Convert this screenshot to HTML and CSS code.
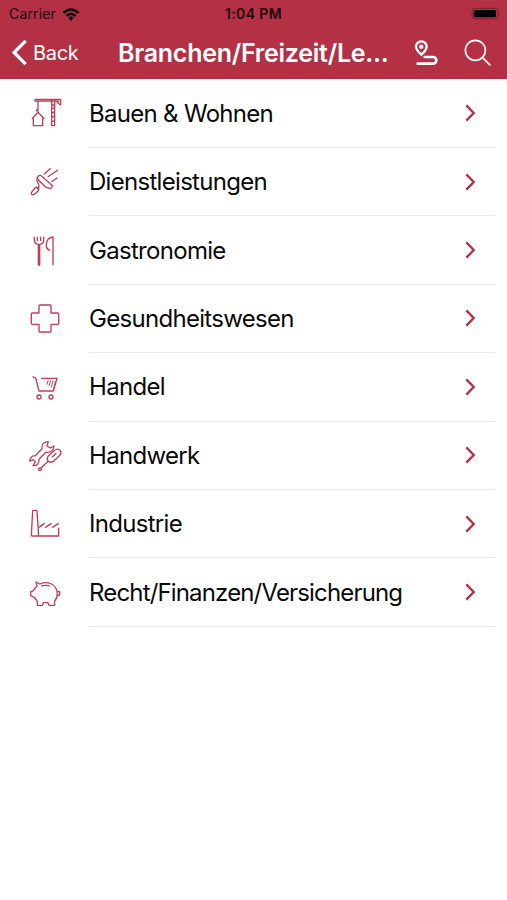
FILE: index.html
```html
<!DOCTYPE html>
<html lang="de">
<head>
  <meta charset="UTF-8" />
  <meta name="viewport" content="width=device-width, initial-scale=1.0"/>
  <title>Branchen/Freizeit/Leben</title>
  <link rel="stylesheet" href="styles.css">
</head>
<body>
  <header>
    <div class="status-bar">
      <div class="carrier">
        <span>Carrier</span>
        <svg class="wifi" viewBox="0 0 54 42">
          <path d="M2 15 Q27 -8 52 15 L47 20 Q27 2 7 20 Z"/>
          <path d="M11 24 Q27 9 43 24 L38 29 Q27 19 16 29 Z"/>
          <path d="M19 32 Q27 25 35 32 L27 41 Z"/>
        </svg>
      </div>
      <span class="time">1:04 PM</span>
      <svg class="battery" viewBox="0 0 90 42">
        <rect class="shell" x="3" y="4" width="78" height="32" rx="10"/>
        <rect x="8" y="9" width="67" height="22" rx="5"/>
        <path class="tip" d="M85 15 Q90 20 85 25 Z"/>
      </svg>
    </div>

    <nav>
      <a class="back" href="#">
        <svg viewBox="0 0 48 80"><path d="M41 5 L6 40 L41 75"/></svg>
        <span>Back</span>
      </a>
      <h1>Branchen/Freizeit/Le...</h1>
      <a class="route" href="#" aria-label="Route">
        <svg viewBox="0 0 72 78">
          <path d="M22 44 Q6 29 6 20 A16 16 0 0 1 38 20 Q38 29 22 44 Z"/>
          <circle cx="22" cy="20" r="3"/>
          <path class="road" d="M32 51 H57 A10 10 0 0 1 57 71 H11"/>
        </svg>
      </a>
      <a class="search" href="#" aria-label="Suche">
        <svg viewBox="0 0 84 84">
          <circle cx="34" cy="34" r="30"/>
          <path d="M56 56 L79 79"/>
        </svg>
      </a>
    </nav>
  </header>

  <main>
    <ul>
      <li>
        <svg class="icon" viewBox="0 0 180 150">
          <path d="M43 28 H122 V45 L112 38 V33 M43 33 H118"/>
          <path d="M54 33 V57 Q47 60 51 64 M54 57 V67 L36 86 M54 67 L73 86 M40 85 V107 H68 V85"/>
          <path d="M95 30 V108 M104 30 V108 M95 45 H104 M95 57 L104 52 M95 70 L104 65 M95 83 L104 78 M95 96 L104 91 M95 107 H104"/>
        </svg>
        <a href="#">
          <span>Bauen &amp; Wohnen</span>
          <svg class="chevron" viewBox="0 0 36 54"><path d="M7 4 L29 27 L7 50"/></svg>
        </a>
      </li>
      <li>
        <svg class="icon" viewBox="0 0 180 150">
          <path d="M64 53 L98 84 L92 92 L78 88 L54 65 Q50 59 54 55 Q58 51 64 53"/>
          <path d="M54 58 Q48 65 53 73 Q62 86 51 93 M55 88 Q59 95 51 102 L41 110 Q33 112 34 104 L45 90 Q50 86 55 88"/>
          <path d="M72 49 L92 31 M83 57 L114 36 M94 72 L112 59"/>
        </svg>
        <a href="#">
          <span>Dienstleistungen</span>
          <svg class="chevron" viewBox="0 0 36 54"><path d="M7 4 L29 27 L7 50"/></svg>
        </a>
      </li>
      <li>
        <svg class="icon" viewBox="0 0 180 150">
          <path d="M43 29 V40 Q43 51 55 52 V114 H59 V52 Q71 51 71 40 V29 M52 29 V43 M62 29 V43"/>
          <path d="M99 115 V30 Q80 32 79 53 Q78 67 90 70"/>
        </svg>
        <a href="#">
          <span>Gastronomie</span>
          <svg class="chevron" viewBox="0 0 36 54"><path d="M7 4 L29 27 L7 50"/></svg>
        </a>
      </li>
      <li>
        <svg class="icon" viewBox="0 0 180 150">
          <path d="M60 30 H90 Q93 30 93 33 V54 H113 Q116 54 116 57 V85 Q116 88 113 88 H93 V108 Q93 111 90 111 H60 Q57 111 57 108 V88 H37 Q34 88 34 85 V57 Q34 54 37 54 H57 V33 Q57 30 60 30 Z"/>
        </svg>
        <a href="#">
          <span>Gesundheitswesen</span>
          <svg class="chevron" viewBox="0 0 36 54"><path d="M7 4 L29 27 L7 50"/></svg>
        </a>
      </li>
      <li>
        <svg class="icon" viewBox="0 0 180 150">
          <path d="M38 41 L47 45 L57 84 H100 L111 46 H64"/>
          <path class="thin" d="M80 65 L85 52 M87 69 L92 52 M94 73 L99 53 M101 77 L107 54"/>
          <circle cx="57" cy="102" r="6"/>
          <circle cx="93" cy="102" r="6"/>
        </svg>
        <a href="#">
          <span>Handel</span>
          <svg class="chevron" viewBox="0 0 36 54"><path d="M7 4 L29 27 L7 50"/></svg>
        </a>
      </li>
      <li>
        <svg class="icon" viewBox="0 0 180 150">
          <path d="M85 29 Q64 29 66 50 L46 71 Q31 71 29 87 L40 83 L46 90 L39 101 Q58 102 57 82 L77 61 Q100 63 102 42 L91 48 L81 42 Z"/>
          <path d="M84 73 L102 56 Q114 47 121 56 Q126 64 117 72 L99 89 Q90 93 84 87 Q79 80 84 73 M109 63 L96 76"/>
          <path d="M84 88 L63 108"/>
          <circle cx="60" cy="112" r="4"/>
        </svg>
        <a href="#">
          <span>Handwerk</span>
          <svg class="chevron" viewBox="0 0 36 54"><path d="M7 4 L29 27 L7 50"/></svg>
        </a>
      </li>
      <li>
        <svg class="icon" viewBox="0 0 180 150">
          <path d="M34 108 L38 33 Q38 31 40 31 H49 Q51 31 51 33 L56 108 M34 108 H116 V83"/>
          <path d="M56 82 L74 70 M75 83 L95 70 M96 83 L116 70"/>
        </svg>
        <a href="#">
          <span>Industrie</span>
          <svg class="chevron" viewBox="0 0 36 54"><path d="M7 4 L29 27 L7 50"/></svg>
        </a>
      </li>
      <li>
        <svg class="icon" viewBox="0 0 180 150">
          <path d="M48 39 L60 45 Q77 37 94 45 Q107 51 111 66 Q114 84 104 96 V109 H87 L84 101 H70 L67 109 H52 V97 L42 84 L32 80 V68 Q40 68 43 60 L51 51 Z"/>
          <path d="M64 51 Q77 47 89 51 M111 68 H119 V78 L112 80"/>
        </svg>
        <a href="#">
          <span class="long">Recht/Finanzen/Versicherung</span>
          <svg class="chevron" viewBox="0 0 36 54"><path d="M7 4 L29 27 L7 50"/></svg>
        </a>
      </li>
    </ul>
  </main>
</body>
</html>
```
FILE: styles.css
```css
:root {
  --primary-color: #b43045;
  --icon-color: #bd3e58;
  --line-color: #e9e9ea;
}

body {
  font-family: Inter, "Liberation Sans", sans-serif;
  background-color: #fff;
  color: #0a0a0a;
  margin: 0;
}

a {
  color: inherit;
  text-decoration: none;
}

svg {
  display: block;
  flex-shrink: 0;
}

header {
  height: 79px;
  background-color: var(--primary-color);
}

.status-bar {
  display: grid;
  grid-template-columns: 1fr auto 1fr;
  align-items: center;
  height: 27px;
  padding: 0 6px;
  font-size: 14px;
  color: #22070b;
}

.carrier {
  display: flex;
  align-items: center;
  gap: 6px;
  padding-left: 3px;
  letter-spacing: 0.15px;
}

.wifi {
  width: 18px;
  height: 14px;
}

.time {
  font-weight: 600;
  letter-spacing: 0.4px;
}

.battery {
  width: 30px;
  height: 14px;
  justify-self: end;
  fill: #000;
}

.battery .shell {
  fill: none;
  stroke: #7c2030;
  stroke-width: 3;
}

.battery .tip {
  fill: #7c2030;
}

nav {
  display: flex;
  align-items: center;
  height: 51px;
  color: #fff;
}

nav svg {
  fill: none;
  stroke: #fff;
}

.back {
  display: flex;
  align-items: center;
  gap: 5px;
  width: 106px;
  padding-left: 12px;
  font-size: 20px;
  letter-spacing: -0.3px;
}

.back svg {
  width: 16px;
  height: 27px;
  stroke-width: 10;
}

h1 {
  width: 271px;
  margin: 0;
  font-size: 25px;
  font-weight: 600;
  letter-spacing: -0.25px;
  white-space: nowrap;
}

.route {
  margin-left: 25px;
}

.route svg {
  width: 24px;
  height: 26px;
  stroke-width: 7;
}

.route .road {
  stroke-width: 8;
  stroke-linecap: round;
}

.search {
  margin-left: 26px;
}

.search svg {
  width: 28px;
  height: 28px;
  stroke-width: 5;
}

ul {
  list-style: none;
  margin: 0;
  padding: 0.6px 12px 0 20px;
}

li {
  display: flex;
  align-items: center;
  height: 68.4px;
}

.icon {
  width: 60px;
  height: 50px;
  margin-right: 9px;
  margin-top: 2px;
  fill: none;
  stroke: var(--icon-color);
  stroke-width: 4;
  stroke-linejoin: round;
}

.icon .thin {
  stroke-width: 3;
}

li a {
  display: flex;
  flex: 1;
  align-items: center;
  justify-content: space-between;
  box-sizing: border-box;
  height: 100%;
  padding-right: 19px;
  border-bottom: 1px solid var(--line-color);
  font-size: 24px;
  letter-spacing: -0.7px;
}

.long {
  letter-spacing: -0.84px;
}

.chevron {
  width: 12px;
  height: 18px;
  fill: none;
  stroke: var(--primary-color);
  stroke-width: 7;
}
```
